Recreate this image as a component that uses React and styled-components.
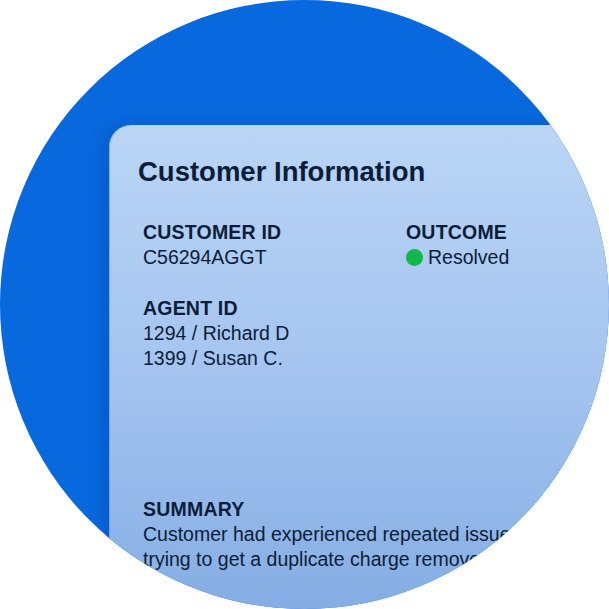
import React from 'react';
import styled, { createGlobalStyle } from 'styled-components';

const Global = createGlobalStyle`
  html, body {
    margin: 0;
    padding: 0;
    background: #ffffff;
  }
  body {
    font-family: 'Liberation Sans', Arial, sans-serif;
  }
`;

const Circle = styled.div`
  width: 609px;
  height: 609px;
  border-radius: 50%;
  overflow: hidden;
  background: #0869df;
  padding: 125px 0 0 109px;
  box-sizing: border-box;
`;

const Card = styled.div`
  width: 560px;
  height: 520px;
  box-sizing: border-box;
  padding: 31px 0 0 29px;
  border-top-left-radius: 22px;
  background: linear-gradient(180deg, #bad5f5 0%, #a3c3ef 50%, #80aae2 100%);
  box-shadow: -6px 0 16px rgba(0, 50, 140, 0.25), inset 1px 0 0 rgba(90, 150, 235, 0.6);
  color: #0b1d38;
`;

const Title = styled.h2`
  margin: 0;
  font-size: 27.5px;
  line-height: 32px;
  font-weight: 700;
`;

const Fields = styled.div`
  margin: 31px 0 0 5px;
  display: grid;
  grid-template-columns: 263px 1fr;
  row-gap: 25px;
`;

const Field = styled.div`
  grid-column: ${(p) => (p.$wide ? '1 / -1' : 'auto')};
  margin-top: ${(p) => p.$offset || 0}px;
`;

const Label = styled.div`
  font-size: 19.5px;
  line-height: 26px;
  font-weight: 700;
  letter-spacing: 0.2px;
`;

const Value = styled.div`
  font-size: 19.5px;
  line-height: 25px;
  white-space: nowrap;
  display: flex;
  align-items: center;
`;

const Dot = styled.span`
  width: 17px;
  height: 17px;
  border-radius: 50%;
  background: #12b84b;
  margin-right: 5px;
  flex-shrink: 0;
`;

export default function App() {
  return (
    <>
      <Global />
      <Circle>
        <Card>
          <Title>Customer Information</Title>
          <Fields>
            <Field>
              <Label>CUSTOMER ID</Label>
              <Value>C56294AGGT</Value>
            </Field>
            <Field>
              <Label>OUTCOME</Label>
              <Value>
                <Dot />
                Resolved
              </Value>
            </Field>
            <Field $wide>
              <Label>AGENT ID</Label>
              <Value>1294 / Richard D</Value>
              <Value>1399 / Susan C.</Value>
            </Field>
            <Field $wide $offset={100}>
              <Label>SUMMARY</Label>
              <Value>Customer had experienced repeated issues when</Value>
              <Value>trying to get a duplicate charge removed from</Value>
            </Field>
          </Fields>
        </Card>
      </Circle>
    </>
  );
}
